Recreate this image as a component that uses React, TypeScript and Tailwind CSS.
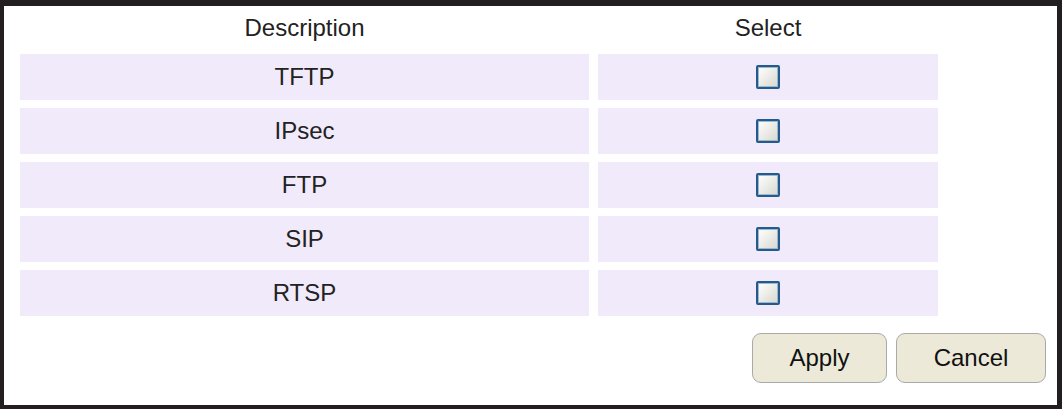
import React from 'react'

const protocols = ['TFTP', 'IPsec', 'FTP', 'SIP', 'RTSP']

// Old-style checkbox with the blue frame
const Box = () => (
  <span className="block w-[24px] h-[24px] border-2 border-[#245a8c] rounded-[2px] bg-gradient-to-br from-white to-[#d8d8d0] shadow-[inset_0_0_0_1px_#9fb6cf]"></span>
)

const Button = ({ label, width }: { label: string; width: string }) => (
  <button
    className={`${width} h-[50px] rounded-[9px] border border-[#a9a9a9] bg-[#ece9d8] text-[24px] text-[#111] leading-none`}
  >
    {label}
  </button>
)

export default function App() {
  return (
    <div
      className="w-[1062px] h-[409px] bg-white border-[#231f20] border-t-[6px] border-l-[4px] border-r-[5px] border-b-[4px] text-[#222]"
      style={{ fontFamily: '"Liberation Sans", Arial, sans-serif' }}
    >
      <div className="pl-[16px]">
        {/* Header */}
        <div className="grid grid-cols-[569px_340px] gap-x-[9px] h-[48px] items-center text-[24px]">
          <div className="text-center pb-[4px]">Description</div>
          <div className="text-center pb-[4px]">Select</div>
        </div>

        {/* Rows */}
        <div className="flex flex-col gap-[8px]">
          {protocols.map((p) => (
            <div key={p} className="grid grid-cols-[569px_340px] gap-x-[9px] h-[46px] text-[24px]">
              <div className="bg-[#f0eafa] flex items-center justify-center">{p}</div>
              <div className="bg-[#f0eafa] flex items-center justify-center">
                <Box />
              </div>
            </div>
          ))}
        </div>

        {/* Actions */}
        <div className="flex justify-end gap-[9px] pr-[11px] mt-[17px]">
          <Button label="Apply" width="w-[135px]" />
          <Button label="Cancel" width="w-[150px]" />
        </div>
      </div>
    </div>
  )
}
